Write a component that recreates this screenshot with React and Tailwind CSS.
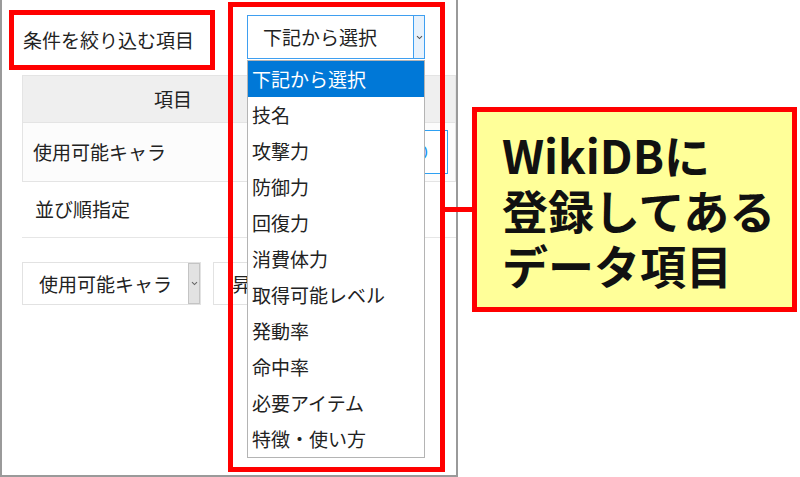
const OPTIONS = [
  "下記から選択",
  "技名",
  "攻撃力",
  "防御力",
  "回復力",
  "消費体力",
  "取得可能レベル",
  "発動率",
  "命中率",
  "必要アイテム",
  "特徴・使い方",
];

const font = "font-['Noto_Sans_CJK_JP','Noto_Sans',sans-serif]";

function Chevron({ className }) {
  return (
    <svg width="7" height="5" viewBox="0 0 7 5" className={className}>
      <path d="M1 1.2 L3.5 3.6 L6 1.2" fill="none" stroke="currentColor" strokeWidth="1.1" />
    </svg>
  );
}

function FilterPanel() {
  return (
    <div className="w-[458px] h-[477px] bg-white border-x-2 border-b-2 border-[#9a9a9a] pl-[20px] text-[19px] text-[#222]">
      {/* condition row */}
      <div className="flex h-[75px] pt-[15px]">
        <div className="w-[225px] pl-[1px] pt-[3px] leading-[44px]">条件を絞り込む項目</div>
        <div className="flex w-[178px] h-[44px] border border-[#3f9ff0] bg-white">
          <div className="flex-1 pl-[15px] leading-[42px]">下記から選択</div>
          <div className="w-[11px] flex items-center justify-center bg-[#e8f2fc] border-l border-[#3f9ff0] text-[#555]">
            <Chevron />
          </div>
        </div>
      </div>

      {/* table */}
      <div className="flex h-[48px] bg-[#efefef] border border-[#e4e4e4]">
        <div className="w-[300px] flex items-center justify-center">項目</div>
      </div>
      <div className="flex items-center justify-between h-[59px] bg-[#fcfcfc] border-x border-b border-[#e4e4e4]">
        <div className="pl-[10px]">使用可能キャラ</div>
        <div className="w-[120px] h-[44px] mr-[7px] border border-[#2ea0f2] bg-white text-[#2196f3] text-right pr-[16px] leading-[42px]">
          絞り
        </div>
      </div>

      {/* sort order */}
      <div className="flex items-center h-[56px] border-b border-[#e6e6e6] pl-[13px]">並び順指定</div>

      <div className="flex gap-[12px] mt-[24px]">
        <div className="flex w-[179px] h-[43px] border border-[#e2e2e2] bg-white">
          <div className="flex-1 pl-[16px] leading-[41px]">使用可能キャラ</div>
          <div className="w-[12px] flex items-center justify-center bg-[#e2e2e2] border border-[#c4c4c4] text-[#666]">
            <Chevron />
          </div>
        </div>
        <div className="w-[150px] h-[43px] border border-[#e2e2e2] bg-white pl-[18px] leading-[41px]">昇順</div>
      </div>
    </div>
  );
}

export default function App() {
  return (
    <div className={`relative w-[800px] h-[477px] bg-white overflow-hidden ${font}`}>
      <FilterPanel />

      {/* open option list */}
      <div className="absolute left-[247px] top-[60px] w-[178px] border border-[#b4b4b4] bg-white text-[19px] text-[#222]">
        {OPTIONS.map((o, i) => (
          <div
            key={o}
            className={`h-[36px] pl-[4px] leading-[36px] whitespace-nowrap ${i === 0 ? "bg-[#0078d7] text-white" : ""}`}
          >
            {o}
          </div>
        ))}
      </div>

      {/* callouts */}
      <div className="absolute left-[9px] top-[10px] w-[206px] h-[60px] border-[5px] border-[#ff0000]" />
      <div className="absolute left-[228px] top-[2px] w-[217px] h-[470px] border-[5px] border-[#ff0000]" />
      <div className="absolute left-[445px] top-[207px] w-[27px] h-[5px] bg-[#ff0000]" />
      <div className="absolute left-[472px] top-[107px] w-[325px] h-[205px] border-[5px] border-[#ff0000] bg-[#ffff99] pl-[25px] pt-[15px] text-[46px] leading-[55px] font-bold text-[#111]">
        <div>WikiDBに</div>
        <div>登録してある</div>
        <div>データ項目</div>
      </div>
    </div>
  );
}
